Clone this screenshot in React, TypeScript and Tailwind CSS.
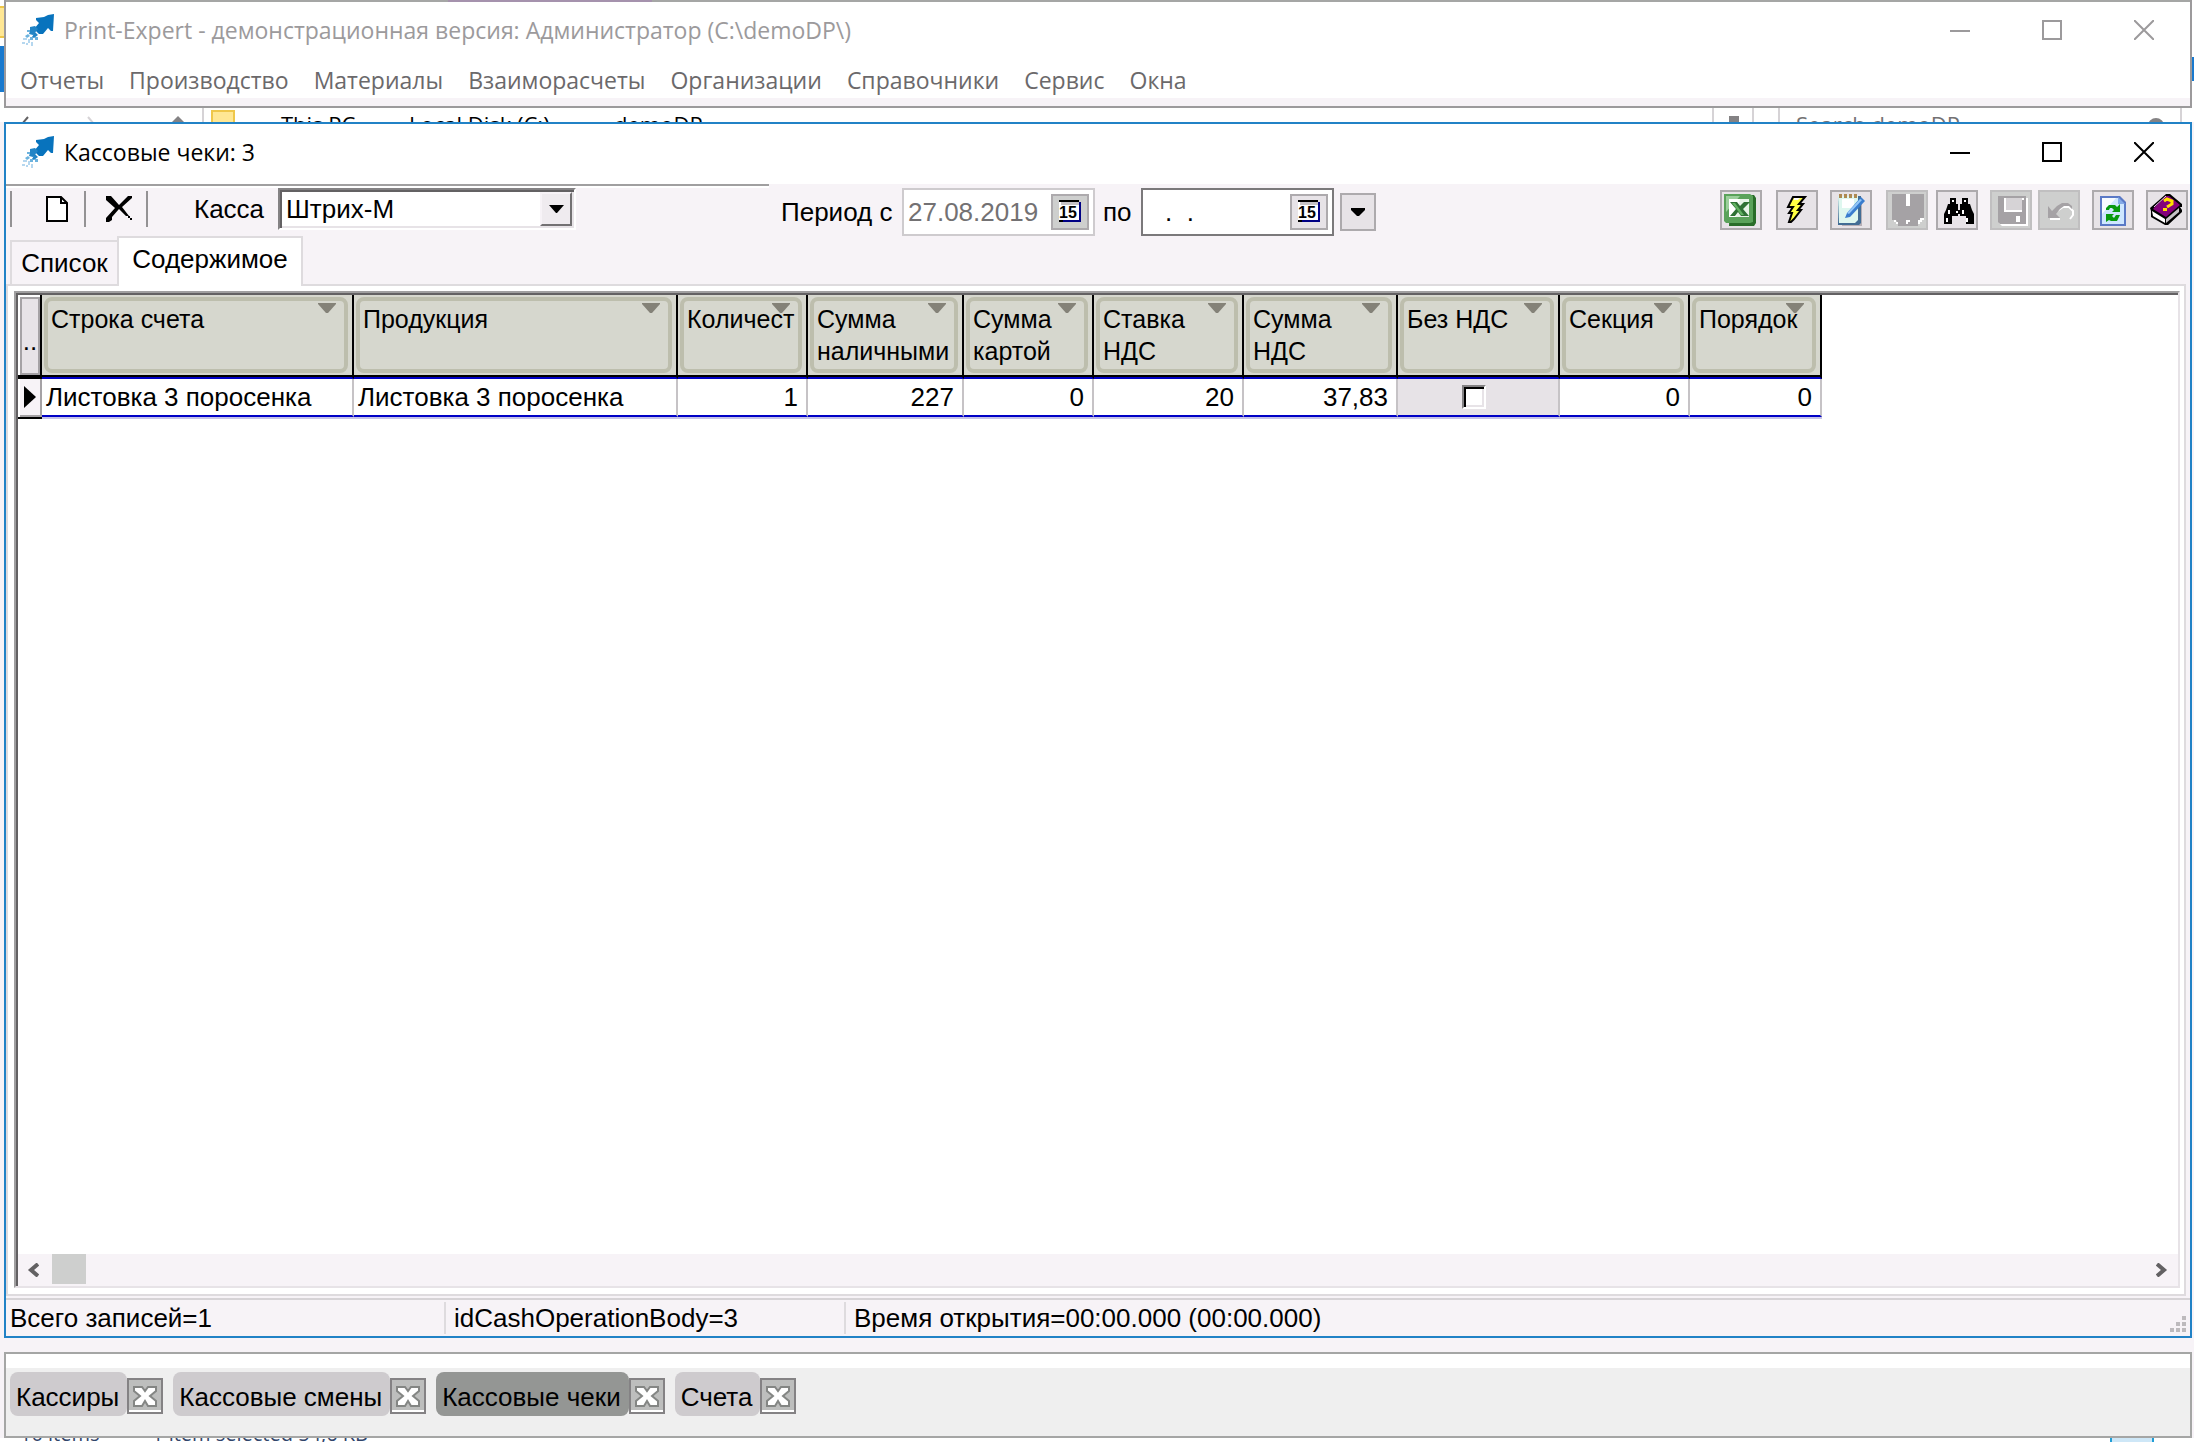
import type { ReactNode } from "react";

const menu = [
  "Отчеты",
  "Производство",
  "Материалы",
  "Взаиморасчеты",
  "Организации",
  "Справочники",
  "Сервис",
  "Окна",
];

const columns = [
  { title: "Строка счета", value: "Листовка 3 поросенка", width: "w-[312px]" },
  { title: "Продукция", value: "Листовка 3 поросенка", width: "w-[324px]" },
  { title: "Количест", value: "1", width: "w-[130px]", right: true },
  { title: "Сумма наличными", value: "227", width: "w-[156px]", right: true },
  { title: "Сумма картой", value: "0", width: "w-[130px]", right: true },
  { title: "Ставка НДС", value: "20", width: "w-[150px]", right: true },
  { title: "Сумма НДС", value: "37,83", width: "w-[154px]", right: true },
  { title: "Без НДС", value: null, width: "w-[162px]" },
  { title: "Секция", value: "0", width: "w-[130px]", right: true },
  { title: "Порядок", value: "0", width: "w-[132px]", right: true },
];

const openWindows = [
  { title: "Кассиры", active: false },
  { title: "Кассовые смены", active: false },
  { title: "Кассовые чеки", active: true },
  { title: "Счета", active: false },
];

function AppIcon() {
  return (
    <svg className="size-8 shrink-0" viewBox="0 0 32 32">
      <path fill="#0873bd" d="M32 0l-1 17h-2l-3-3-5 6h-4l-5-5 5-6-3-3V4l8-1 4-2z" />
      <path fill="#2184c6" d="M8 13l5-1 3 3-5 6-4-1 1-3zM13 18l3 3-4 3-2-1z" />
      <path fill="#6bb2de" d="M5 16h3v2H5zM3 22l3-2 2 2-3 2zM8 23h3v3H8zM13 23h3v3h-3z" />
      <path fill="#b5d7ef" d="M1 24h4v2H1zM6 25h2v4H6zM0 28h3v2H0zM9 28h2v4H9zM4 29h2v2H4z" />
    </svg>
  );
}

function TitleBar({ title, muted }: { title: string; muted?: boolean }) {
  return (
    <div
      className={`flex h-15 items-center bg-white pr-9 pb-1 pl-4 font-['Open_Sans','Noto_Sans',sans-serif] text-[23px] leading-8 ${
        muted ? "text-[#9c9a9c]" : "text-black"
      }`}
    >
      <AppIcon />
      <h1 className="ml-2.5 flex-1 whitespace-nowrap">{title}</h1>
      <div className="flex items-center gap-[72px]">
        <button aria-label="Свернуть">
          <svg className="block size-5" viewBox="0 0 20 20" stroke="currentColor" strokeWidth="2">
            <path d="M0 11h20" />
          </svg>
        </button>
        <button aria-label="Развернуть">
          <svg className="block size-5" viewBox="0 0 20 20" fill="none" stroke="currentColor" strokeWidth="2">
            <path d="M1 1h18v18H1z" />
          </svg>
        </button>
        <button aria-label="Закрыть">
          <svg className="block size-5" viewBox="0 0 20 20" stroke="currentColor" strokeWidth="2">
            <path d="M0 0l20 20M20 0L0 20" />
          </svg>
        </button>
      </div>
    </div>
  );
}

function ToolButton({
  label,
  disabled,
  children,
}: {
  label: string;
  disabled?: boolean;
  children: ReactNode;
}) {
  return (
    <button
      aria-label={label}
      disabled={disabled}
      className={`h-10 w-[42px] shrink-0 border-2 ${
        disabled ? "border-[#c0bfc0] bg-[#cecfce]" : "border-[#adaaad] bg-[#e7e3e7]"
      }`}
    >
      <svg className="block h-9 w-[38px]" viewBox="2 2 38 36">
        {children}
      </svg>
    </button>
  );
}

function CalendarButton({ label, disabled }: { label: string; disabled?: boolean }) {
  return (
    <button
      aria-label={label}
      disabled={disabled}
      className={`h-9 w-[38px] shrink-0 border-2 border-[#adaaad] ${
        disabled ? "bg-[#cecfce]" : "bg-[#e7e3e7]"
      }`}
    >
      <svg className="block h-8 w-[34px]" viewBox="0 0 34 32">
        <path fill="#848284" d="M8 26h20V8h-2v16H8z" />
        <path fill="#000084" d="M6 22h20V6h2v20H6z" />
        <path fill="#fff" d="M6 6h20v18H6z" />
        <path fill="#c6c3c6" d="M8 6h18v3H8z" />
        <path fill="#000" d="M6 4h20v2H6zM6 24h4v2H6z" />
        <text
          x="15"
          y="22"
          textAnchor="middle"
          fontFamily="Liberation Sans, sans-serif"
          fontWeight="bold"
          fontSize="16"
        >
          15
        </text>
      </svg>
    </button>
  );
}

function Toolbar() {
  return (
    <div className="flex h-[52px] items-start">
      <div className="w-[763px] shrink-0 border-t-2 border-[#a09fa0]">
        <div className="flex h-11 items-center border-t-2 border-white pl-1">
          <i className="h-9 w-0.5 bg-[#949294]" />
          <button aria-label="Новый" className="ml-[34px]">
            <svg className="block h-[26px] w-[22px]" viewBox="0 0 22 26">
              <path fill="#fff" stroke="#000" strokeWidth="2" d="M1 1h14l6 6v18H1z" />
              <path fill="none" stroke="#000" strokeWidth="2" d="M15 1v6h6" />
            </svg>
          </button>
          <i className="ml-4 h-9 w-0.5 bg-[#949294]" />
          <button aria-label="Удалить" className="ml-5">
            <svg className="block size-[26px]" viewBox="0 0 26 26">
              <path
                fill="#000"
                d="M0 0h5l8 9 9-9h4v2l-10 9 7 9h-3l-7-7-7 8v3l-3 2H0v-4l9-10-9-8zM22 20h2v2h2v2h-2v-2h-2z"
              />
            </svg>
          </button>
          <i className="ml-[14px] h-9 w-0.5 bg-[#949294]" />
          <label htmlFor="kassa" className="ml-[46px] w-[84px] text-[26px] leading-8">
            Касса
          </label>
          <div className="relative h-[42px] w-[298px]">
            <select
              id="kassa"
              className="h-[42px] w-full appearance-none border-2 border-t-[#848284] border-l-[#848284] border-r-white border-b-white bg-white pl-1.5 text-[26px] leading-8 shadow-[inset_2px_2px_0_#636163,inset_-2px_-2px_0_#e7e3e7]"
            >
              <option>Штрих-М</option>
            </select>
            <span className="pointer-events-none absolute top-1 right-1 flex h-[34px] w-8 items-center justify-center border-2 border-t-[#f7f3f7] border-l-[#f7f3f7] border-r-[#737173] border-b-[#737173] bg-[#efebef]">
              <svg className="h-2 w-[15px]" viewBox="0 0 15 8">
                <path d="M0 0h15L8 8H7z" />
              </svg>
            </span>
          </div>
        </div>
      </div>

      <div className="mt-1 flex shrink-0 items-center pl-3 text-[26px] leading-8">
        <label htmlFor="from" className="w-[121px] whitespace-nowrap">
          Период с
        </label>
        <div className="flex h-12 w-[193px] items-center border-2 border-[#cecbce] bg-white pr-1">
          <input
            id="from"
            disabled
            defaultValue="27.08.2019"
            className="w-full min-w-0 pl-1 text-[#737173]"
          />
          <CalendarButton label="Выбрать начало" disabled />
        </div>
        <label htmlFor="to" className="w-[46px] pl-2">
          по
        </label>
        <div className="flex h-12 w-[193px] items-center border-2 border-[#7b797b] bg-white pr-1">
          <input id="to" defaultValue=".  ." className="w-full min-w-0 pl-[22px]" />
          <CalendarButton label="Выбрать конец" />
        </div>
        <button
          aria-label="Период"
          className="ml-1.5 flex h-[38px] w-9 items-center justify-center border-2 border-[#adaaad] bg-[#e7e3e7]"
        >
          <svg className="h-2 w-[14px]" viewBox="0 0 14 8">
            <path d="M0 0h14v2L8 8H6L0 2z" />
          </svg>
        </button>
      </div>

      <div className="mt-1.5 ml-auto flex gap-3 pr-0.5">
        <div className="mr-0.5">
          <ToolButton label="Excel">
            <path fill="#296d29" d="M10 5h24l2 3v25l-2 3H9z" />
            <path fill="#5aa25a" d="M4 4h26l3 2v26l-3 1H6l-2-2z" />
            <path fill="#9ccf9c" d="M6 6h14L6 22z" />
            <path fill="#fff" d="M9 9h20v18H9z" />
            <path fill="#e7f3e7" d="M20 9h9v18H16z" />
            <path fill="#2f7135" d="M10 12h7l3 4 4-4h6l-7 7 6 7h-8l-3-4-3 4h-5l6-7z" />
            <path fill="#63b263" d="M12 13h3l9 12h-3z" />
          </ToolButton>
        </div>
        <ToolButton label="Выполнить">
          <path
            fill="#ffff42"
            stroke="#000"
            strokeWidth="2"
            d="M17 7h12l-6 7h4l-5 6h3l-7 9-3 3h-2l3-9h-3l4-6h-5z"
          />
          <path fill="#fff" d="M18 8h6l-2 2h-4z" />
        </ToolButton>
        <div className="mr-0.5">
          <ToolButton label="Изменить">
            <path fill="#b5aeb5" d="M12 8h20v28H12z" />
            <path fill="#426d94" d="M8 6h23v27l-2 2H8z" />
            <path fill="#def7ef" d="M8 6h20v24l-3 3H9z" />
            <path fill="#fff" d="M12 9h12v9H12z" />
            <path fill="#ad8a52" d="M9 4h3v4H9zM14 4h3v4h-3zM19 4h3v4h-3zM24 4h3v4h-3z" />
            <path fill="#397dce" d="M31 7l4 4-15 16-5 1 2-5z" />
            <path fill="#94c7f7" d="M30 9l2 1-13 14-2-1z" />
          </ToolButton>
        </div>
        <div className="-mr-1">
          <ToolButton label="Журнал" disabled>
            <path fill="#a5a2a5" d="M6 4h14v12h4V4h14v26h-3l-3 4v2H12v-2l-2-4H6z" />
            <path
              fill="#fff"
              d="M20 4h4v12h-4zM8 30h2v2h2v2h-2v-2H8zM20 30h4v2h-2v2h-2zM34 28h4v2h-2v2h-2v2h-2v-4h2z"
            />
          </ToolButton>
        </div>
        <ToolButton label="Найти">
          <path
            fill="#000"
            d="M14 8h6v6h2v6h2v-6h2V8h6v6h2l2 6 2 4v10h-8v-8h-6v-2h-2v2h-6v8H8V24l2-4 2-6h2z"
          />
          <path
            fill="#fff"
            d="M16 10h2v2h-2zM28 10h2v2h-2zM12 20h2v4h-2zM26 20h2v4h-2zM10 28h2v4h-2zM30 28h2v4h-2zM20 21h2v2h-2z"
          />
        </ToolButton>
        <div className="-mr-1.5">
          <ToolButton label="Сохранить" disabled>
            <path fill="#fff" d="M12 8h26v28H12l-3-3h27z" />
            <path fill="#a5a2a5" d="M8 6h28v28H10l-2-2z" />
            <path fill="#d6d3d6" d="M14 8h18v12H14z" />
            <path fill="#fff" d="M14 8h2v12h-2zM14 20h18v2H14zM32 8h2v2h-2zM26 26h4v6h-4z" />
          </ToolButton>
        </div>
        <ToolButton label="Отменить" disabled>
          <path
            fill="none"
            stroke="#fff"
            strokeWidth="2"
            d="M19 21l6-4h6l4 4v4l-3 4M12 29h10"
          />
          <path fill="#a5a2a5" d="M10 16v12h12l-4-4 4-5 4-3h5l3 3v-3l-4-3h-6l-5 3-5 5z" />
        </ToolButton>
        <ToolButton label="Обновить">
          <path fill="#5a79c6" d="M8 6h20l6 6v24H8z" />
          <path fill="#cee7ff" d="M10 8h16v6h6v20H10z" />
          <path fill="#f7fbff" d="M10 8h14L10 24z" />
          <path fill="#84aae7" d="M26 7l7 7h-7z" />
          <path
            fill="#089a10"
            d="M14 18l3-3h6l2 2 3-3v8h-8l2-2-2-2h-2l-1 2h-3zM28 25l-3 6h-6l-2-1-3 2v-8h8l-2 2 2 2 2-3z"
          />
        </ToolButton>
        <ToolButton label="Справка">
          <path fill="#000" d="M20 4h4l12 10v3h-2l2 3v2L22 35h-3L5 27v-6l-1-3z" />
          <path fill="#84007b" d="M20 6h3l11 9-14 12L7 19z" />
          <path fill="#fff" d="M6 21l13 8v4L7 26z" />
          <path fill="#c6c3c6" d="M20 29l13-11v4L20 33z" />
          <path fill="none" stroke="#f7c7f7" d="M8 17L20 6" />
          <path fill="none" stroke="#ffdf00" strokeWidth="3" d="M18 11l3-2 5 2v3l-5 3" />
          <path fill="#ffdf00" d="M17 18h4v3h-4z" />
        </ToolButton>
      </div>
    </div>
  );
}

function Grid() {
  return (
    <div className="flex flex-1 flex-col border-2 border-t-[#a09fa0] border-l-[#a09fa0] border-r-[#e7e3e7] border-b-[#e7e3e7]">
      <div className="flex flex-1 flex-col border-t-2 border-l-2 border-[#636163]">
        <table className="w-[1804px] table-fixed border-separate border-spacing-0 text-[26px] leading-8">
          <thead>
            <tr>
              <th className="h-[84px] w-6 border-r-2 border-b-4 border-black p-0 align-top font-normal">
                <div className="mt-0.5 ml-0.5 flex h-[78px] items-end justify-center border-2 border-[#a5a2a5] bg-[#e7e3e7] pb-4">
                  ..
                </div>
              </th>
              {columns.map((c) => (
                <th
                  key={c.title}
                  className={`${c.width} relative h-[84px] border-r-2 border-b-2 border-r-black border-b-[#0000c6] bg-[#d6d7ce] p-0 text-left align-top text-[25px] font-normal`}
                >
                  <div className="h-[82px] border-b-2 border-black pt-0.5 pr-1 pl-0.5">
                    <div className="h-[76px] overflow-hidden rounded-lg border-4 border-[#bdbead] pt-0.5 pl-[3px]">
                      {c.title}
                    </div>
                  </div>
                  <svg className="absolute top-2 right-4 h-2.5 w-[18px]" viewBox="0 0 18 10">
                    <path fill="#848278" d="M0 0h18v1l-8 9H8L0 1z" />
                  </svg>
                </th>
              ))}
            </tr>
          </thead>
          <tbody>
            <tr>
              <td className="h-10 border-b-2 border-black p-0 align-top">
                <div className="ml-0.5 flex h-[38px] items-center border-r-2 border-b-2 border-[#a5a2a5] bg-[#f7f3f7] pl-1">
                  <svg className="h-[22px] w-3" viewBox="0 0 12 22">
                    <path d="M0 0l12 11L0 22z" />
                  </svg>
                </div>
              </td>
              {columns.map((c) => (
                <td key={c.title} className="h-10 border-b-2 border-[#c6c3e7] p-0">
                  <div
                    className={`flex h-[38px] items-center border-r-2 border-b-2 border-r-[#c6c3c6] border-b-[#0000c6] ${
                      c.right ? "justify-end pr-2" : "pl-1"
                    } ${c.value === null ? "justify-center bg-[#e7e3e7] pr-3" : "bg-white"}`}
                  >
                    {c.value ?? (
                      <input
                        type="checkbox"
                        aria-label={c.title}
                        className="size-6 appearance-none border-2 border-t-[#848284] border-l-[#848284] border-r-white border-b-white bg-white shadow-[inset_2px_2px_0_#000,inset_-2px_-2px_0_#e7e3e7]"
                      />
                    )}
                  </div>
                </td>
              ))}
            </tr>
          </tbody>
        </table>

        <div className="mt-auto flex h-8 items-center bg-[#f7f3f7] pr-2.5 pl-[9px]">
          <button aria-label="Влево">
            <svg className="block h-[14px] w-3" viewBox="0 0 12 14" fill="none" stroke="#636163" strokeWidth="4">
              <path d="M11 1L4 7l7 6" />
            </svg>
          </button>
          <div className="mb-0.5 ml-[13px] h-[30px] w-[34px] bg-[#cecfce]" />
          <button aria-label="Вправо" className="ml-auto">
            <svg className="block h-[14px] w-3" viewBox="0 0 12 14" fill="none" stroke="#636163" strokeWidth="4">
              <path d="M1 1l7 6-7 6" />
            </svg>
          </button>
        </div>
      </div>
    </div>
  );
}

// Top edge of the file manager that shows between the two windows
function ExplorerStrip() {
  return (
    <div
      aria-hidden
      className="flex h-3.5 items-start overflow-hidden bg-white pr-3 pl-[22px] font-['Open_Sans',sans-serif] text-[22px] whitespace-nowrap"
    >
      <svg className="mt-2 h-4 w-[150px]" viewBox="0 0 150 16" fill="none" strokeWidth="2">
        <path stroke="#636163" d="M6 1L0 8l6 7" />
        <path stroke="#d6d3d6" d="M66 1l6 7-6 7" />
      </svg>
      <svg className="mt-2 h-4 w-3" viewBox="0 0 12 16">
        <path fill="#848284" d="M6 0l6 6v4H0V6z" />
      </svg>
      <div className="ml-[18px] flex h-9 flex-1 border-x-2 border-[#d6d3d6] pl-[7px]">
        <span className="mt-0.5 h-6 w-6 border-2 border-[#efc74a] bg-[#ffe794]" />
        <span className="ml-[46px] w-32">This PC</span>
        <span className="w-[205px]">Local Disk (C:)</span>
        <span>demoDP</span>
        <span className="-mr-0.5 ml-auto flex w-[42px] justify-center border-l-2 border-[#d6d3d6] pt-2">
          <i className="h-3 w-2.5 bg-[#848284]" />
        </span>
      </div>
      <div className="ml-6 flex h-9 w-[404px] border-x-2 border-[#d6d3d6] pl-4 text-[#737173]">
        Search demoDP
        <i className="mt-2.5 mr-4 ml-auto size-4 rounded-full bg-[#848284]" />
      </div>
    </div>
  );
}

export default function App() {
  return (
    <div className="flex min-h-screen flex-col bg-[#f7f3f7] font-['Liberation_Sans',Arial,sans-serif] text-black">
      <header className="flex bg-white">
        <div className="flex w-1 flex-col gap-2 pt-1.5">
          <i className="h-8 border-y-2 border-[#efc74a] bg-[#ffe794]" />
          <i className="h-[46px] bg-[#1879ce]" />
        </div>
        <div className="flex-1 border-x-2 border-b-2 border-[#9c9a9c]">
          <div className="flex h-0.5 bg-[#a5a6a5] pl-[442px]">
            <i className="w-[204px] bg-[#a592ad]" />
          </div>
          <TitleBar title="Print-Expert - демонстрационная версия: Администратор (C:\demoDP\)" muted />
          <nav className="flex h-9 items-center gap-[25px] bg-white pl-3.5 font-['Open_Sans','Noto_Sans',sans-serif] text-[23px] leading-8 text-[#6b696b]">
            {menu.map((m) => (
              <a key={m} href="#">
                {m}
              </a>
            ))}
          </nav>
          <div className="h-2 bg-[#f7f3f7]" />
        </div>
        <div className="w-0.5 pt-[57px]">
          <i className="block h-6 bg-[#1879ce]" />
        </div>
      </header>

      <ExplorerStrip />

      <main className="mr-0.5 ml-1 flex flex-1 flex-col border-2 border-[#2182c6] bg-[#f7f3f7]">
        <TitleBar title="Кассовые чеки: 3" />
        <Toolbar />

        <div role="tablist" className="flex items-end pl-1 text-[26px] leading-8">
          <button
            role="tab"
            aria-selected="false"
            className="h-11 w-[107px] border-2 border-r-0 border-b-0 border-[#dedbde]"
          >
            Список
          </button>
          <button
            role="tab"
            aria-selected="true"
            className="relative -mb-0.5 h-[50px] w-[186px] border-2 border-b-0 border-[#dedbde] bg-white pb-1.5"
          >
            Содержимое
          </button>
        </div>
        <div className="mr-1 mb-0.5 flex flex-1 flex-col border-2 border-[#dedbde] bg-white pt-[5px] pr-1 pb-1.5 pl-1.5">
          <Grid />
        </div>

        <footer className="flex h-[38px] border-t-2 border-[#d6d3d6] text-[26px] leading-9">
          <span className="my-0.5 w-[440px] border-r-2 border-[#dedbde] pl-1 leading-8">
            Всего записей=1
          </span>
          <span className="my-0.5 w-[400px] border-r-2 border-[#dedbde] pl-2 leading-8">
            idCashOperationBody=3
          </span>
          <span className="my-0.5 pl-2 leading-8">Время открытия=00:00.000 (00:00.000)</span>
          <svg className="mt-4 mr-1 ml-auto size-4" viewBox="0 0 16 16">
            <path
              fill="#bdbabd"
              d="M12 0h4v4h-4zM12 6h4v4h-4zM6 6h4v4H6zM0 12h4v4H0zM6 12h4v4H6zM12 12h4v4h-4z"
            />
          </svg>
        </footer>
      </main>

      <section className="mt-3.5 mr-0.5 ml-1 border-2 border-[#a5a6a5] bg-[#efefef]">
        <div className="h-3.5 bg-white" />
        <div className="flex h-17 items-start gap-2.5 pt-1 pl-1 text-[26px] leading-8">
          {openWindows.map((w) => (
            <div key={w.title} className="flex items-start">
              <button
                className={`h-11 rounded-lg pt-1.5 pr-2 pl-1.5 whitespace-nowrap ${
                  w.active ? "bg-[#949694]" : "bg-[#cecbce]"
                }`}
              >
                {w.title}
              </button>
              <button
                aria-label={`Закрыть ${w.title}`}
                className="mt-1.5 size-9 border-2 border-[#848284] bg-[#bdbebd] shadow-[inset_0_-2px_0_#fff]"
              >
                <svg className="block size-8" viewBox="0 0 32 32">
                  <path
                    fill="#fff"
                    stroke="#848684"
                    strokeWidth="2"
                    d="M5 7h8l3 4 3-4h8v4l-6 5 6 5v5h-8l-3-5-3 5H5v-5l6-5-6-5z"
                  />
                </svg>
              </button>
            </div>
          ))}
        </div>
      </section>
      <div
        aria-hidden
        className="flex h-1 items-end overflow-hidden bg-white pr-10 pl-5 font-['Open_Sans',sans-serif] text-xl text-[#31456b]"
      >
        <span className="-mb-1.5 w-[132px]">10 items</span>
        <span className="-mb-1.5">1 item selected 54,6 KB</span>
        <i className="ml-auto h-1 w-11 border-x-2 border-[#219ed6] bg-[#cee7f7]" />
      </div>
    </div>
  );
}
